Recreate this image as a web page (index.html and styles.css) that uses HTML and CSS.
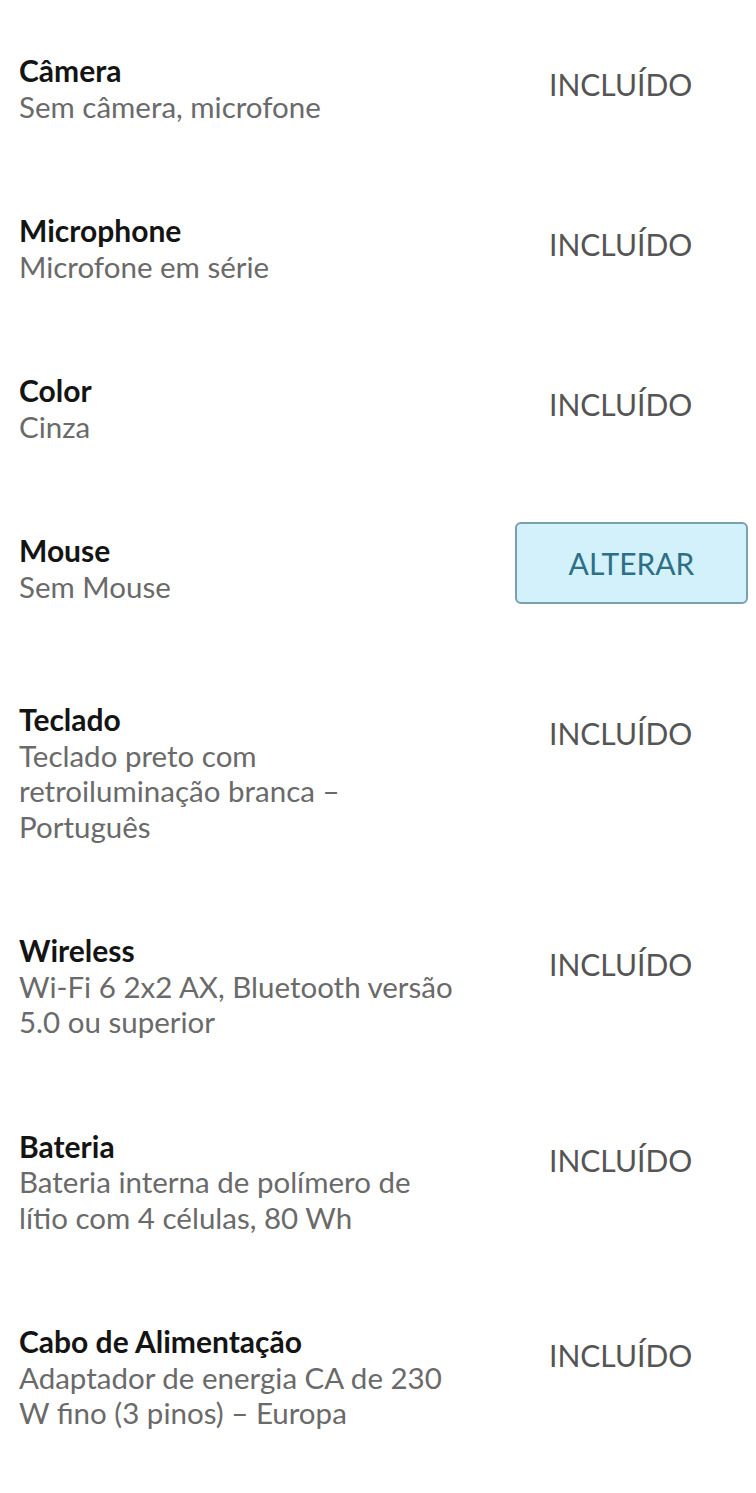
FILE: index.html
```html
<!DOCTYPE html>
<html lang="pt">
<head>
<meta charset="utf-8">
<title>Configuração</title>
<link rel="stylesheet" href="styles.css">
</head>
<body>
<div class="list">
  <div class="row">
    <div class="info"><div class="title">Câmera</div><div class="desc">Sem câmera, microfone</div></div>
    <div class="action"><span class="status">INCLUÍDO</span></div>
  </div>
  <div class="row">
    <div class="info"><div class="title">Microphone</div><div class="desc">Microfone em série</div></div>
    <div class="action"><span class="status">INCLUÍDO</span></div>
  </div>
  <div class="row">
    <div class="info"><div class="title">Color</div><div class="desc">Cinza</div></div>
    <div class="action"><span class="status">INCLUÍDO</span></div>
  </div>
  <div class="row">
    <div class="info"><div class="title">Mouse</div><div class="desc">Sem Mouse</div></div>
    <div class="action"><button class="change">ALTERAR</button></div>
  </div>
  <div class="row">
    <div class="info"><div class="title">Teclado</div><div class="desc">Teclado preto com retroiluminação branca – Português</div></div>
    <div class="action"><span class="status">INCLUÍDO</span></div>
  </div>
  <div class="row">
    <div class="info"><div class="title">Wireless</div><div class="desc">Wi-Fi 6 2x2 AX, Bluetooth versão 5.0 ou superior</div></div>
    <div class="action"><span class="status">INCLUÍDO</span></div>
  </div>
  <div class="row">
    <div class="info"><div class="title">Bateria</div><div class="desc">Bateria interna de polímero de lítio com 4 células, 80 Wh</div></div>
    <div class="action"><span class="status">INCLUÍDO</span></div>
  </div>
  <div class="row">
    <div class="info"><div class="title">Cabo de Alimentação</div><div class="desc">Adaptador de energia CA de 230 W fino (3 pinos) – Europa</div></div>
    <div class="action"><span class="status">INCLUÍDO</span></div>
  </div>
</div>
</body>
</html>
```
FILE: styles.css
```css
html, body {
  margin: 0;
  padding: 0;
  background: #ffffff;
}
body {
  font-family: Lato, "Open Sans", sans-serif;
  width: 756px;
}
.list {
  padding-top: 42px;
  display: flex;
  flex-direction: column;
}
.row {
  display: flex;
  justify-content: space-between;
  align-items: flex-start;
  padding: 0 8px 0 19px;
  margin-bottom: 78px;
}
.info {
  padding-top: 11px;
  width: 442px;
}
.title {
  font-size: 30px;
  line-height: 35.5px;
  font-weight: 700;
  color: #141414;
}
.desc {
  font-size: 29.5px;
  line-height: 35.5px;
  color: #6a6a6a;
}
.action {
  width: 233px;
  flex: none;
}
.status {
  display: block;
  padding-top: 24px;
  padding-left: 34px;
  font-size: 30px;
  line-height: 36px;
  color: #555555;
}
.change {
  display: block;
  width: 233px;
  height: 82px;
  margin-bottom: 9px;
  box-sizing: border-box;
  background: #d3f1fb;
  border: 2px solid #7aa0ae;
  border-radius: 6px;
  font-family: Lato, "Open Sans", sans-serif;
  font-size: 30px;
  color: #2e6f86;
  padding: 0;
}
```
